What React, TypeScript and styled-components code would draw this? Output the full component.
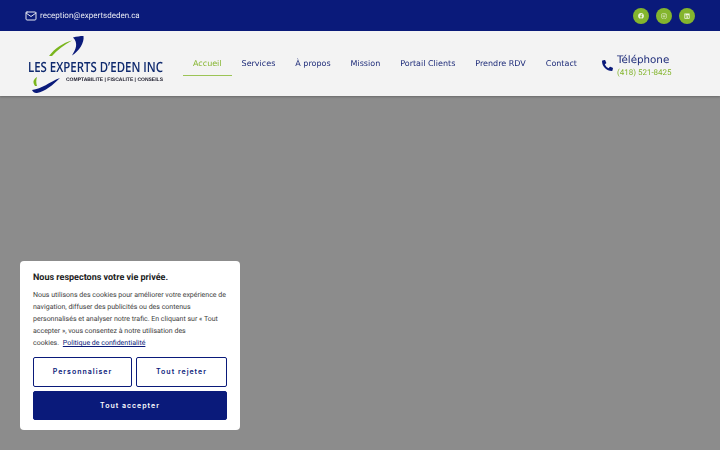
import styled, { createGlobalStyle } from 'styled-components';
import { FaFacebook, FaInstagram, FaLinkedin, FaPhoneAlt } from 'react-icons/fa';
import { FiMail } from 'react-icons/fi';

const navItems = ['Accueil', 'Services', 'À propos', 'Mission', 'Portail Clients', 'Prendre RDV', 'Contact'];

const Global = createGlobalStyle`
  html, body {
    margin: 0;
    padding: 0;
    height: 100%;
    overflow: hidden;
    background: #8c8c8c;
    text-rendering: geometricPrecision;
  }
  * {
    box-sizing: border-box;
  }
`;

const App = () => {
  return (
    <Page>
      <Global />
      <TopBar>
        <Email>
          <FiMail size={12} />
          <span>reception@expertsdeden.ca</span>
        </Email>
        <Socials>
          <Social><FaFacebook size={6} /></Social>
          <Social><FaInstagram size={6} /></Social>
          <Social><FaLinkedin size={6} /></Social>
        </Socials>
      </TopBar>
      <Header>
        <Logo viewBox="0 0 136 60" role="img" aria-label="Les Experts d'Eden Inc">
          <path d="M21 21 C27 13 35 8 44 5.5 C36 10 29 15 24 21 Z" fill="#7ab51d" />
          <path d="M45 2.5 C49 1.5 52 1 55.5 1 C56.5 8 51 16 44 20.5 C48 14 50.5 8 45 2.5 Z" fill="#0a1a7a" />
          <path d="M5.5 46 C6 44.5 7.5 43 9 42 C8 45 8 48 9 51 L7 51 C6 49.5 5.3 48 5.5 46 Z" fill="#7ab51d" />
          <path d="M4 55 C14 54 21 47 32 43 C25 50 17 56.5 9 58 C7 58.5 5 57 4 55 Z" fill="#0a1a7a" />
          <LogoName x="0" y="30.3" transform="scale(1 1.22)" textLength="135" lengthAdjust="spacingAndGlyphs">
            LES EXPERTS D’EDEN INC
          </LogoName>
          <LogoTag x="38" y="45.5" textLength="97" lengthAdjust="spacingAndGlyphs">
            COMPTABILITE | FISCALITE | CONSEILS
          </LogoTag>
        </Logo>
        <Nav>
          {navItems.map((item, i) => (
            <NavLink key={item} $active={i === 0}>{item}</NavLink>
          ))}
        </Nav>
        <Phone>
          <FaPhoneAlt size={11} color="#0a1a7a" />
          <PhoneText>
            <PhoneLabel>Téléphone</PhoneLabel>
            <PhoneNumber>(418) 521-8425</PhoneNumber>
          </PhoneText>
        </Phone>
      </Header>
      <CookieCard>
        <CookieTitle>Nous respectons votre vie privée.</CookieTitle>
        <CookieText>
          Nous utilisons des cookies pour améliorer votre expérience de navigation, diffuser des publicités ou des
          contenus personnalisés et analyser notre trafic. En cliquant sur « Tout accepter », vous consentez à notre
          utilisation des <NoWrap>cookies. <PolicyLink>Politique de confidentialité</PolicyLink></NoWrap>
        </CookieText>
        <Buttons>
          <OutlineButton>Personnaliser</OutlineButton>
          <OutlineButton>Tout rejeter</OutlineButton>
          <AcceptButton>Tout accepter</AcceptButton>
        </Buttons>
      </CookieCard>
    </Page>
  );
};

export default App;

const Page = styled.div`
  width: 720px;
  height: 450px;
  background: #8c8c8c;
  font-family: 'Roboto', sans-serif;
`;

const TopBar = styled.div`
  height: 31px;
  background: #0a1a7a;
  display: flex;
  align-items: center;
  justify-content: space-between;
  padding: 0 25px;
`;

const Email = styled.div`
  display: flex;
  align-items: center;
  gap: 3px;
  color: #e6e8f2;
  font-size: 8px;
  will-change: opacity;
  svg {
    width: 12px;
  }
`;

const Socials = styled.div`
  display: flex;
  gap: 7px;
`;

const Social = styled.div`
  width: 16px;
  height: 16px;
  border-radius: 50%;
  background: #84b52e;
  color: #f0f5e6;
  display: flex;
  align-items: center;
  justify-content: center;
`;

const Header = styled.header`
  height: 65px;
  background: #f3f3f3;
  display: flex;
  align-items: center;
  padding: 0 0 0 28px;
  box-shadow: 0 1px 2px rgba(0, 0, 0, 0.25);
`;

const Logo = styled.svg`
  width: 136px;
  height: 60px;
  flex: none;
  margin-top: 3px;
  will-change: opacity;
`;

const LogoName = styled.text`
  font-family: 'Open Sans', sans-serif;
  font-size: 11.5px;
  font-weight: 600;
  fill: #0f2a6e;
`;

const LogoTag = styled.text`
  font-family: 'Liberation Sans', sans-serif;
  font-size: 5px;
  font-weight: 700;
  fill: #1a1a2a;
`;

const Nav = styled.nav`
  display: flex;
  margin: 2px 0 0 19px;
  will-change: opacity;
`;

const NavLink = styled.a<{ $active?: boolean }>`
  font-family: 'DejaVu Sans', sans-serif;
  font-size: 8px;
  line-height: 22px;
  padding: 0 10px;
  white-space: nowrap;
  color: ${(p) => (p.$active ? '#84b52e' : '#1c2a78')};
  border-bottom: 1px solid ${(p) => (p.$active ? '#9cc456' : 'transparent')};
`;

const Phone = styled.div`
  display: flex;
  align-items: center;
  gap: 4px;
  margin: 4px 0 0 15px;
  will-change: opacity;
`;

const PhoneText = styled.div`
  display: flex;
  flex-direction: column;
`;

const PhoneLabel = styled.span`
  font-family: 'DejaVu Sans', sans-serif;
  font-size: 10.3px;
  line-height: 13px;
  color: #1c2a78;
`;

const PhoneNumber = styled.span`
  font-family: 'Roboto', sans-serif;
  font-size: 8px;
  line-height: 11px;
  color: #84b52e;
`;

const CookieCard = styled.div`
  position: fixed;
  left: 20px;
  top: 261px;
  width: 220px;
  height: 169px;
  background: #fff;
  border-radius: 4px;
  padding: 11px 13px 0;
`;

const CookieTitle = styled.div`
  font-size: 9px;
  font-weight: 700;
  line-height: 12px;
  color: #212121;
  margin-bottom: 5px;
`;

const CookieText = styled.p`
  margin: 0;
  font-size: 7px;
  line-height: 12px;
  color: #404040;
`;

const NoWrap = styled.span`
  white-space: nowrap;
`;

const PolicyLink = styled.a`
  color: #0a1a7a;
  text-decoration: underline;
  margin-left: 2px;
`;

const Buttons = styled.div`
  display: grid;
  grid-template-columns: 99px 91px;
  grid-auto-rows: 29.5px;
  gap: 4px;
  margin-top: 8px;
`;

const OutlineButton = styled.button`
  font-family: 'Inter', sans-serif;
  font-size: 7px;
  font-weight: 600;
  letter-spacing: 1px;
  color: #0a1a7a;
  background: #fff;
  border: 1.5px solid #0a1a7a;
  border-radius: 2px;
  padding: 0;
`;

const AcceptButton = styled(OutlineButton)`
  grid-column: 1 / 3;
  color: #fff;
  background: #0a1a7a;
`;
